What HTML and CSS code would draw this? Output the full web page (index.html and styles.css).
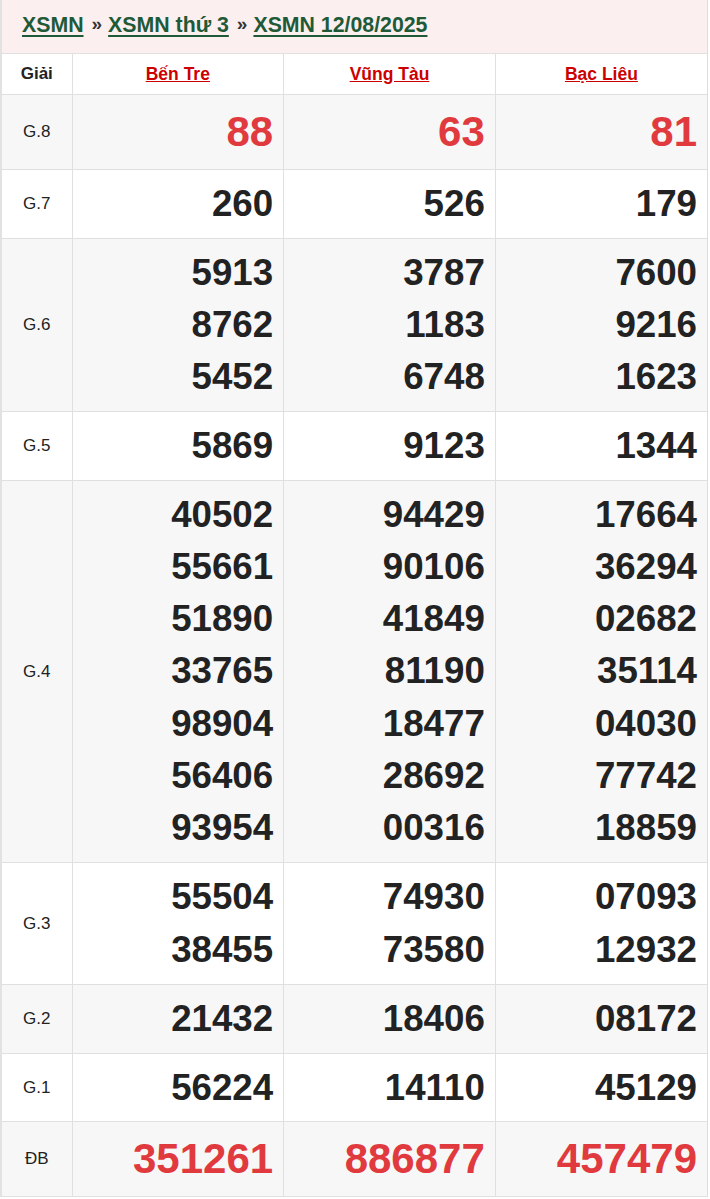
FILE: index.html
```html
<!DOCTYPE html>
<html lang="vi">
<head>
<meta charset="utf-8">
<title>XSMN 12/08/2025</title>
<link rel="stylesheet" href="styles.css">
</head>
<body>
<div class="box">
  <div class="crumbs">
    <a href="#">XSMN</a><span class="sep">»</span><a href="#">XSMN thứ 3</a><span class="sep">»</span><a href="#">XSMN 12/08/2025</a>
  </div>
  <table class="kq">
    <colgroup><col class="c-label"><col><col><col></colgroup>
    <thead>
      <tr>
        <th class="giai">Giải</th>
        <th><a href="#">Bến Tre</a></th>
        <th><a href="#">Vũng Tàu</a></th>
        <th><a href="#">Bạc Liêu</a></th>
      </tr>
    </thead>
    <tbody>
      <tr class="alt big">
        <td class="lbl">G.8</td>
        <td><div class="red">88</div></td>
        <td><div class="red">63</div></td>
        <td><div class="red">81</div></td>
      </tr>
      <tr>
        <td class="lbl">G.7</td>
        <td><div>260</div></td>
        <td><div>526</div></td>
        <td><div>179</div></td>
      </tr>
      <tr class="alt">
        <td class="lbl">G.6</td>
        <td><div>5913</div><div>8762</div><div>5452</div></td>
        <td><div>3787</div><div>1183</div><div>6748</div></td>
        <td><div>7600</div><div>9216</div><div>1623</div></td>
      </tr>
      <tr>
        <td class="lbl">G.5</td>
        <td><div>5869</div></td>
        <td><div>9123</div></td>
        <td><div>1344</div></td>
      </tr>
      <tr class="alt g4">
        <td class="lbl">G.4</td>
        <td><div>40502</div><div>55661</div><div>51890</div><div>33765</div><div>98904</div><div>56406</div><div>93954</div></td>
        <td><div>94429</div><div>90106</div><div>41849</div><div>81190</div><div>18477</div><div>28692</div><div>00316</div></td>
        <td><div>17664</div><div>36294</div><div>02682</div><div>35114</div><div>04030</div><div>77742</div><div>18859</div></td>
      </tr>
      <tr class="g3">
        <td class="lbl">G.3</td>
        <td><div>55504</div><div>38455</div></td>
        <td><div>74930</div><div>73580</div></td>
        <td><div>07093</div><div>12932</div></td>
      </tr>
      <tr class="alt">
        <td class="lbl">G.2</td>
        <td><div>21432</div></td>
        <td><div>18406</div></td>
        <td><div>08172</div></td>
      </tr>
      <tr class="g1">
        <td class="lbl">G.1</td>
        <td><div>56224</div></td>
        <td><div>14110</div></td>
        <td><div>45129</div></td>
      </tr>
      <tr class="alt db">
        <td class="lbl">ĐB</td>
        <td><div class="red">351261</div></td>
        <td><div class="red">886877</div></td>
        <td><div class="red">457479</div></td>
      </tr>
    </tbody>
  </table>
</div>
</body>
</html>
```

FILE: styles.css
```css
html, body {
  margin: 0;
  padding: 0;
  background: #ffffff;
}

body {
  font-family: "Liberation Sans", Arial, sans-serif;
  color: #222222;
}

.box {
  width: 705px;
  border-left: 2px solid #e2e2e2;
  border-right: 1px solid #dddddd;
}

.crumbs {
  height: 53px;
  box-sizing: border-box;
  background: #fbefef;
  padding: 10px 0 0 20px;
  font-size: 21.3px;
  font-weight: bold;
  line-height: 28px;
  white-space: nowrap;
}

.crumbs a {
  color: #1e5a38;
  text-decoration: underline;
  text-decoration-thickness: 2px;
  text-underline-offset: 3px;
}

.crumbs .sep {
  display: inline-block;
  margin: 0 6px 0 8px;
  color: #333333;
  font-size: 19px;
  vertical-align: 2px;
}

.kq {
  width: 705px;
  border-collapse: collapse;
  table-layout: fixed;
}

.kq .c-label {
  width: 70px;
}

.kq th, .kq td {
  border: 1px solid #e0e0e0;
  padding: 8px 10px;
}

.kq tr > :first-child {
  border-left: none;
}

.kq tr > :last-child {
  border-right: none;
}

.kq th {
  background: #ffffff;
  font-size: 17.5px;
  line-height: 24px;
  font-weight: bold;
  text-align: center;
}

.kq th a {
  color: #cc0000;
  text-decoration: underline;
}

.kq th.giai {
  color: #222222;
  font-size: 17px;
  padding: 8px 0;
}

.kq td {
  text-align: right;
  vertical-align: middle;
  font-size: 36.7px;
  line-height: 52px;
  font-weight: bold;
  color: #222222;
}

.kq td.lbl {
  text-align: center;
  font-size: 17px;
  font-weight: normal;
  line-height: 20px;
  padding: 8px 0;
  color: #222222;
}

.kq tr.alt td {
  background: #f7f7f7;
}

.kq tr.big td {
  font-size: 42px;
  line-height: 58px;
}

.kq tr.db td {
  font-size: 42px;
  line-height: 58px;
}

.kq tr.g4 td {
  line-height: 52.15px;
}

.kq tr.g3 td {
  line-height: 52.5px;
}

.kq tr.g1 td {
  line-height: 51px;
}

.kq tr td.lbl {
  font-size: 17px;
  line-height: 20px;
}

.kq .red {
  color: #e03a3e;
}
```
